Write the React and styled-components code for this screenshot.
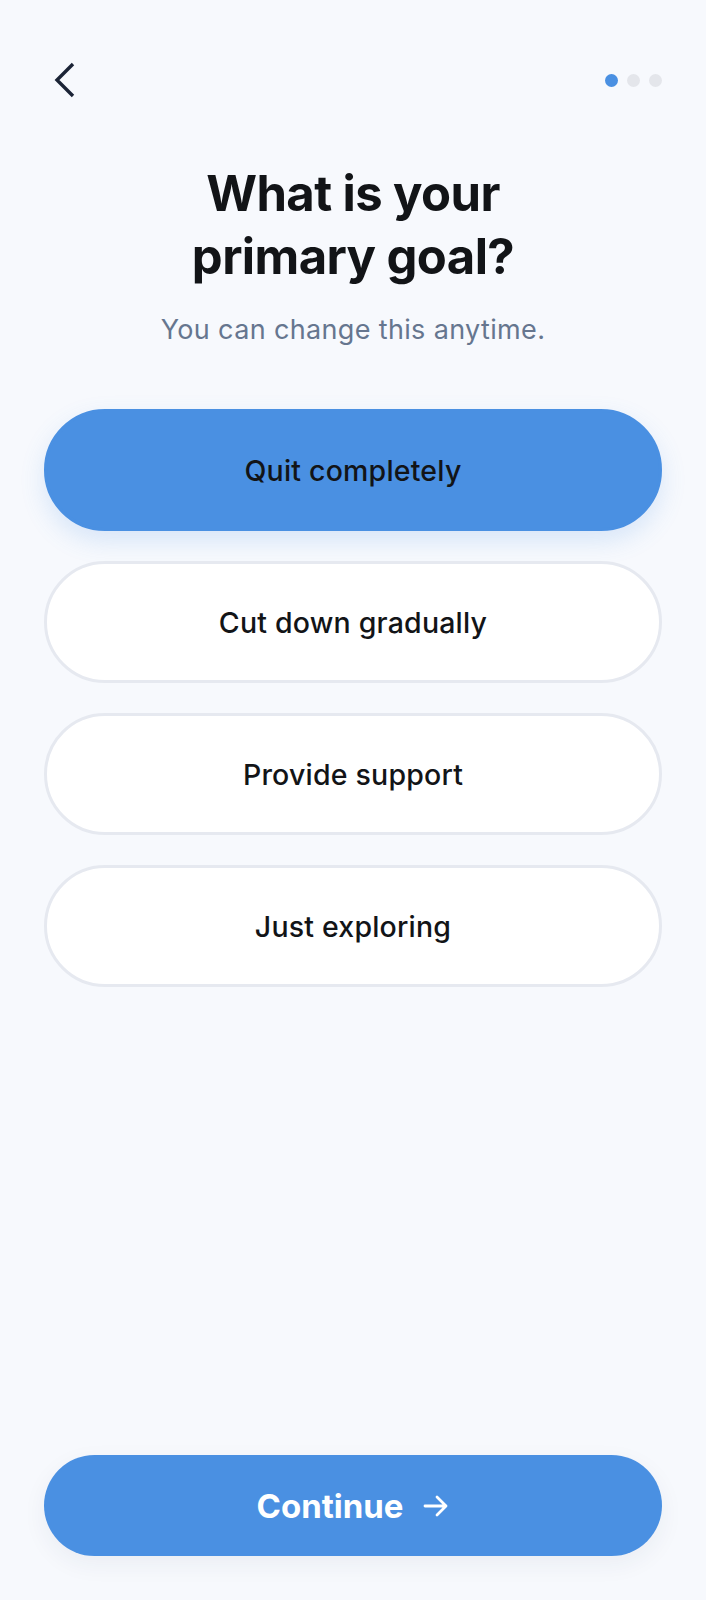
import React, { useState } from "react";
import styled, { createGlobalStyle } from "styled-components";

const Global = createGlobalStyle`
  html, body { margin: 0; padding: 0; background: #f7f9fd; }
  * { box-sizing: border-box; }
  body { font-family: "Inter", "Noto Sans", sans-serif; }
`;

const Page = styled.div`
  min-height: 1600px;
  display: flex;
  flex-direction: column;
  padding: 56px 44px 44px;
  background: #f7f9fd;
`;

const Header = styled.div`
  display: flex;
  align-items: center;
  justify-content: space-between;
  height: 48px;
`;

const BackButton = styled.button`
  background: none;
  border: none;
  padding: 0;
  margin-left: 8px;
  width: 32px;
  height: 48px;
  display: flex;
  align-items: center;
  color: #1b2436;
  cursor: pointer;
`;

const Dots = styled.div`
  display: flex;
  gap: 9px;
`;

const Dot = styled.span`
  width: 13px;
  height: 13px;
  border-radius: 50%;
  background: ${(p) => (p.$active ? "#4a90e2" : "#e4e6eb")};
`;

const Title = styled.h1`
  margin: 58px 0 0;
  text-align: center;
  font-size: 49px;
  line-height: 63px;
  font-weight: 700;
  letter-spacing: -0.6px;
  color: #121417;
`;

const Subtitle = styled.p`
  margin: 25px 0 0;
  text-align: center;
  font-size: 27px;
  line-height: 33px;
  font-weight: 400;
  letter-spacing: 0.35px;
  color: #66768f;
`;

const Options = styled.div`
  display: flex;
  flex-direction: column;
  gap: 30px;
  margin-top: 63px;
`;

const Option = styled.button`
  height: 122px;
  border-radius: 61px;
  border: 3px solid ${(p) => (p.$selected ? "#4a90e2" : "#e6e9f0")};
  background: ${(p) => (p.$selected ? "#4a90e2" : "#ffffff")};
  box-shadow: ${(p) => (p.$selected ? "0 10px 24px rgba(74,144,226,0.18)" : "none")};
  font-family: inherit;
  font-size: 28.5px;
  font-weight: 500;
  letter-spacing: 0.2px;
  color: #121417;
  cursor: pointer;
`;

const Spacer = styled.div`
  flex: 1;
`;

const ContinueButton = styled.button`
  height: 101px;
  border-radius: 51px;
  border: none;
  background: #4a90e2;
  box-shadow: 0 8px 24px rgba(30,50,90,0.06);
  color: #ffffff;
  font-family: inherit;
  font-size: 33px;
  font-weight: 700;
  display: flex;
  align-items: center;
  justify-content: center;
  gap: 20px;
  cursor: pointer;
`;

const options = ["Quit completely", "Cut down gradually", "Provide support", "Just exploring"];

export default function App() {
  const [sel, setSel] = useState(0);
  return (
    <>
      <Global />
      <Page>
        <Header>
          <BackButton aria-label="Back">
            <svg width="24" height="38" viewBox="0 0 24 38" fill="none">
              <path d="M21 3 L5 19 L21 35" stroke="currentColor" strokeWidth="3.4" strokeLinecap="butt" strokeLinejoin="miter" />
            </svg>
          </BackButton>
          <Dots>
            <Dot $active />
            <Dot />
            <Dot />
          </Dots>
        </Header>
        <Title>
          What is your
          <br />
          primary goal?
        </Title>
        <Subtitle>You can change this anytime.</Subtitle>
        <Options>
          {options.map((o, i) => (
            <Option key={o} $selected={i === sel} onClick={() => setSel(i)}>
              {o}
            </Option>
          ))}
        </Options>
        <Spacer />
        <ContinueButton>
          Continue
          <svg width="26" height="26" viewBox="0 0 26 26" fill="none">
            <path d="M2 13 H23 M14 4 L23 13 L14 22" stroke="#fff" strokeWidth="2.8" strokeLinecap="round" strokeLinejoin="round" />
          </svg>
        </ContinueButton>
      </Page>
    </>
  );
}
